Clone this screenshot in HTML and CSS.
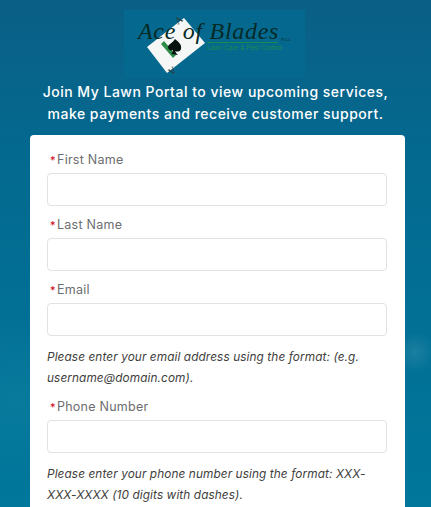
FILE: index.html
```html
<!DOCTYPE html>
<html lang="en">
<head>
    <meta charset="UTF-8">
    <meta name="viewport" content="width=device-width, initial-scale=1.0">
    <title>Join My Lawn Portal</title>
    <link rel="stylesheet" href="styles.css">
</head>
<body>
    <div class="logo">
        <svg class="card" width="181" height="68" viewBox="0 0 181 68">
            <polygon points="60,8 81,33 43,63 23,37" fill="#f4f7f5"/>
            <polygon points="37,34 40,31 52,45 49,48" fill="#2e8b4a"/>
            <path d="M51 29c4 3 7 6 6 10-1 3-4 3-6 2 1 2 2 3 3 4l-7-1c1-1 2-2 2-4-2 1-5 0-5-3 0-3 5-4 7-8z" fill="#06130f"/>
            <text class="pip" transform="translate(54 15) rotate(-38)">A</text>
            <text class="pip" transform="translate(49 56) rotate(142)">A</text>
        </svg>
        <span class="brand">Ace of Blades</span>
        <span class="pllc">PLLC</span>
        <span class="rule"></span>
        <span class="tagline">Lawn Care &amp; Pest Control</span>
    </div>

    <h1>Join My Lawn Portal to view upcoming services, make payments and receive customer support.</h1>

    <form class="panel">
        <div class="field">
            <label for="first"><span class="req">*</span>First Name</label>
            <input type="text" id="first">
        </div>
        <div class="field">
            <label for="last"><span class="req">*</span>Last Name</label>
            <input type="text" id="last">
        </div>
        <div class="field">
            <label for="email"><span class="req">*</span>Email</label>
            <input type="text" id="email">
            <p class="hint">Please enter your email address using the format: (e.g. username@domain.com).</p>
        </div>
        <div class="field">
            <label for="phone"><span class="req">*</span>Phone Number</label>
            <input type="text" id="phone">
            <p class="hint">Please enter your phone number using the format: XXX-XXX-XXXX (10 digits with dashes).</p>
        </div>
    </form>
</body>
</html>
```

FILE: styles.css
```css
html, body {
    height: 507px;
    overflow: hidden;
}
body {
    margin: 0;
    font-family: Inter, "Noto Sans", sans-serif;
    background:
        radial-gradient(circle at 415px 352px, rgba(255, 255, 255, 0.1), transparent 20px),
        radial-gradient(ellipse at 15px 400px, rgba(40, 160, 180, 0.18), transparent 90px),
        linear-gradient(180deg, #0a5f86 0%, #04698f 30%, #00779b 100%);
    padding-top: 10px;
    box-sizing: border-box;
}
.logo {
    position: relative;
    width: 181px;
    height: 68px;
    margin-left: 124px;
    background-color: #05698f;
}
.card {
    position: absolute;
    left: 0;
    top: 0;
}
.pip {
    font-family: "Liberation Serif", serif;
    font-size: 10px;
    fill: #2c3633;
}
.brand {
    position: absolute;
    left: 14px;
    top: 9px;
    font-family: "Liberation Serif", serif;
    font-style: italic;
    font-size: 24px;
    line-height: 24px;
    letter-spacing: 0.7px;
    color: #062a26;
    white-space: nowrap;
}
.pllc {
    position: absolute;
    left: 157px;
    top: 27px;
    font-family: "Liberation Sans", sans-serif;
    font-size: 4px;
    line-height: 5px;
    color: #062a26;
}
.rule {
    position: absolute;
    left: 83px;
    top: 32px;
    width: 71px;
    height: 1px;
    background-color: #1a8a4e;
}
.tagline {
    position: absolute;
    left: 83px;
    top: 34px;
    width: 71px;
    font-family: "Liberation Sans", sans-serif;
    font-size: 6.5px;
    line-height: 8px;
    color: #1a8a4e;
    white-space: nowrap;
}
h1 {
    margin: 3px auto 0;
    width: 370px;
    font-size: 14px;
    font-weight: 500;
    line-height: 22px;
    letter-spacing: 0.5px;
    text-align: center;
    color: #fff;
}
.panel {
    margin: 10px 26px 0 30px;
    padding: 15px 18px 0 17px;
    background-color: #fff;
    border-radius: 4px;
    height: 400px;
}
.field {
    margin-bottom: 9px;
}
label {
    display: block;
    font-size: 12.5px;
    line-height: 19px;
    letter-spacing: 0.25px;
    color: #6b6d70;
    margin-bottom: 4px;
}
.req {
    display: inline-block;
    width: 7px;
    padding-left: 3px;
    font-size: 11px;
    line-height: 1;
    color: #d0021b;
}
input {
    display: block;
    box-sizing: border-box;
    width: 100%;
    height: 33px;
    padding: 0 10px;
    border: 1px solid #e5e0e3;
    border-radius: 4px;
    background-color: #fff;
}
.hint {
    margin: 11px 0 -1px;
    font-size: 11.8px;
    font-style: italic;
    line-height: 21px;
    letter-spacing: 0.1px;
    color: #3e3e3c;
}
```
